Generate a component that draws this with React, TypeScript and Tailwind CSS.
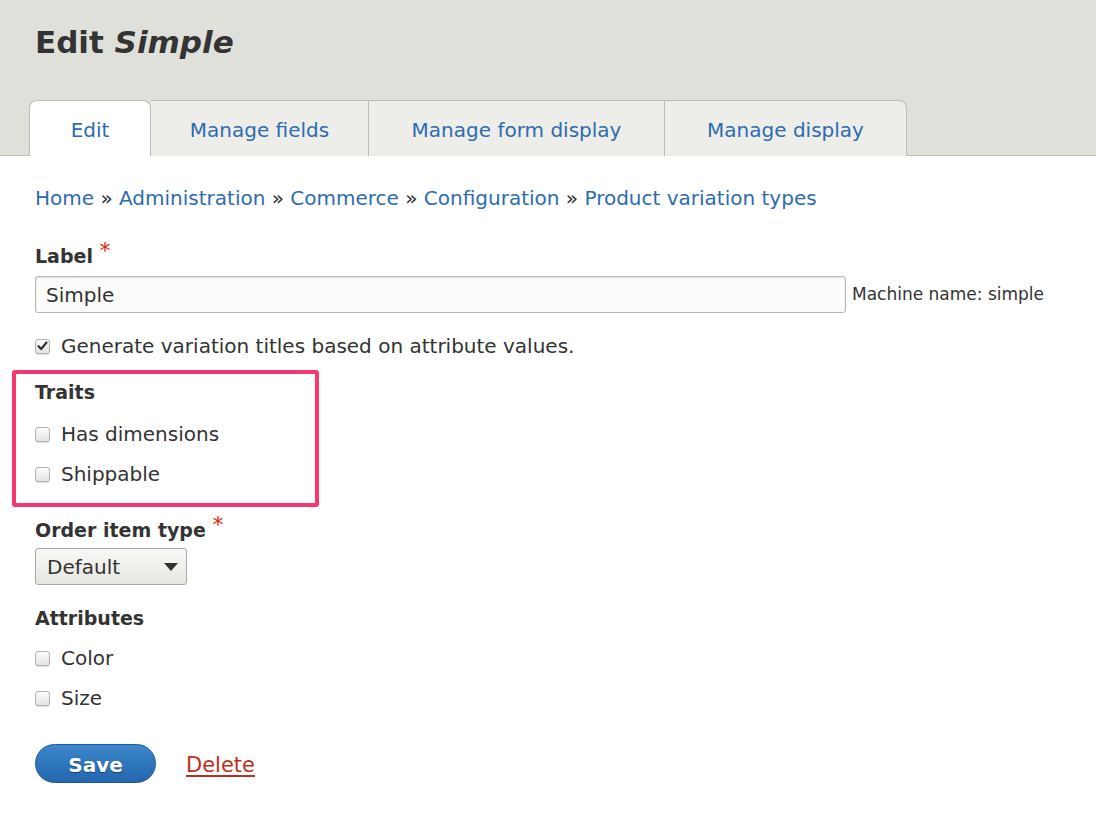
import React from "react";

const font = { fontFamily: '"DejaVu Sans", "Liberation Sans", sans-serif' };

function Box({ checked = false }: { checked?: boolean }) {
  return (
    <span className="flex h-[15px] w-[15px] shrink-0 items-center justify-center rounded-[3px] border border-[#b3b3b3] bg-gradient-to-b from-[#fdfdfd] to-[#e4e4e4] shadow-[0_1px_1px_rgba(0,0,0,0.15)]">
      {checked && (
        <svg width="11" height="10" viewBox="0 0 11 10">
          <path d="M1.5 5.2 L4.2 8 L9.5 1.5" fill="none" stroke="#333" strokeWidth="2.2" strokeLinecap="round" strokeLinejoin="round" />
        </svg>
      )}
    </span>
  );
}

function Check({ label, checked, className = "" }: { label: string; checked?: boolean; className?: string }) {
  return (
    <div className={"flex h-6 items-center gap-[11px] " + className}>
      <Box checked={checked} />
      <span className="text-[20px] text-[#333]">{label}</span>
    </div>
  );
}

const tabs = ["Edit", "Manage fields", "Manage form display", "Manage display"];
const tabWidths = ["w-[122px]", "w-[218px]", "w-[296px]", "w-[242px]"];

export default function App() {
  return (
    <div className="min-h-[838px] w-[1096px] bg-white" style={font}>
      {/* Header */}
      <div className="border-b border-[#bdbdb7] bg-[#e0e0da]">
        <h1 className="px-[35px] pt-[22px] text-[31px] font-bold leading-[40px] text-[#333]">
          Edit <em>Simple</em>
        </h1>
        <div className="mt-[38px] flex pl-[29px]">
          {tabs.map((t, i) => (
            <div
              key={t}
              className={
                "-mb-px flex h-[56px] items-center justify-center pt-[3px] text-[20px] text-[#2e6cad] " +
                tabWidths[i] +
                (i === 0
                  ? " rounded-t-[8px] border border-b-0 border-[#bdbdb7] bg-white"
                  : i === 3
                  ? " rounded-tr-[8px] border-t border-r border-[#bdbdb7] bg-[#ededea]"
                  : " border-t border-r border-[#bdbdb7] bg-[#ededea]")
              }
            >
              {t}
            </div>
          ))}
        </div>
      </div>

      {/* Content */}
      <div className="px-[35px]">
        <div className="mt-[30px] text-[20px] leading-6 text-[#333]">
          {["Home", "Administration", "Commerce", "Configuration", "Product variation types"].map((b, i) => (
            <span key={b}>
              {i > 0 && <span> » </span>}
              <span className="text-[#2e6cad]">{b}</span>
            </span>
          ))}
        </div>

        <div className="mt-[34px] h-6 text-[19px] font-bold leading-6 text-[#333]">
          Label <span className="relative -top-[5px] text-[22px] font-normal text-[#e32700]">*</span>
        </div>
        <div className="mt-[8px] flex items-center">
          <div className="flex h-[37px] w-[811px] items-center rounded-[3px] border border-[#b8b8b8] bg-[#fcfcfa] px-[10px] text-[20px] text-[#333] shadow-[inset_0_1px_2px_rgba(0,0,0,0.12)]">
            Simple
          </div>
          <span className="ml-[6px] text-[17px] text-[#333]">Machine name: simple</span>
        </div>

        <Check label="Generate variation titles based on attribute values." checked className="mt-[21px]" />

        <div className="-mx-[23px] mt-[12px] w-[307px] rounded-[3px] border-[4px] border-[#f7386f] pb-[17px] pl-[19px] pt-[6px]">
          <div className="h-6 text-[19px] font-bold leading-6 text-[#333]">Traits</div>
          <Check label="Has dimensions" className="mt-[18px]" />
          <Check label="Shippable" className="mt-[16px]" />
        </div>

        <div className="mt-[11px] h-6 text-[19px] font-bold leading-6 text-[#333]">
          Order item type <span className="relative -top-[5px] text-[22px] font-normal text-[#e32700]">*</span>
        </div>
        <div className="mt-[6px] flex h-[37px] w-[152px] items-center justify-between rounded-[3px] border border-[#a8a8a8] bg-gradient-to-b from-[#f8f8f6] to-[#e6e6e2] pl-[11px] pr-[8px] text-[20px] text-[#333]">
          <span>Default</span>
          <svg width="14" height="10" viewBox="0 0 14 10">
            <path d="M0 1 H14 L7 9 Z" fill="#333" />
          </svg>
        </div>

        <div className="mt-[21px] h-6 text-[19px] font-bold leading-6 text-[#333]">Attributes</div>
        <Check label="Color" className="mt-[16px]" />
        <Check label="Size" className="mt-[16px]" />

        <div className="mt-[34px] flex items-center gap-[30px]">
          <button className="h-[39px] w-[121px] rounded-full border border-[#1e5a96] bg-gradient-to-b from-[#3b86cc] to-[#2467ae] pt-[3px] text-[20px] font-bold text-white [text-shadow:0_1px_1px_rgba(0,0,0,0.4)]">
            Save
          </button>
          <span className="pt-[4px] text-[21px] text-[#bd2f1c] underline underline-offset-[3px]">Delete</span>
        </div>
      </div>
    </div>
  );
}
